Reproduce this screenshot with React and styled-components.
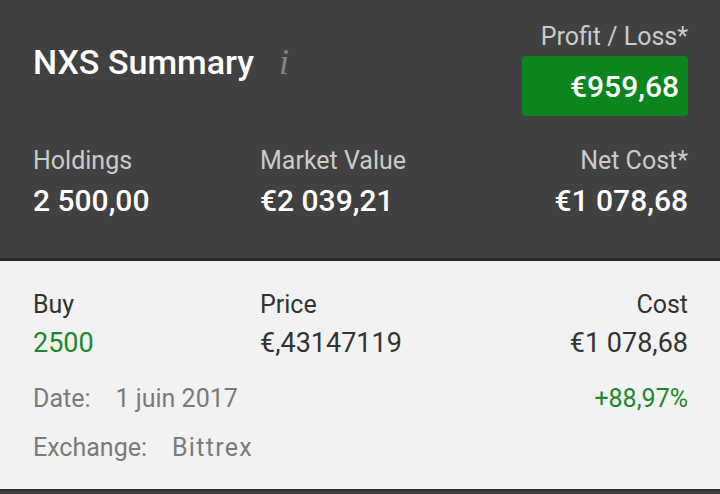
import React from "react";
import styled, { createGlobalStyle } from "styled-components";

const GlobalStyle = createGlobalStyle`
  html, body {
    margin: 0;
    padding: 0;
    background: #414141;
    font-family: Roboto, "Liberation Sans", Arial, sans-serif;
  }
`;

const Page = styled.div`
  width: 720px;
  height: 494px;
  background: #414141;
  overflow: hidden;
`;

const TopPanel = styled.section`
  background: #414141;
  padding: 22px 32px 39px 33px;
  border-bottom: 3px solid #2a2a2a;
`;

const Header = styled.div`
  display: flex;
  justify-content: space-between;
  align-items: flex-start;
`;

const TitleWrap = styled.div`
  display: flex;
  align-items: baseline;
  margin-top: 19px;
`;

const Title = styled.h1`
  margin: 0;
  font-size: 34px;
  line-height: 40px;
  font-weight: 500;
  color: #ffffff;
`;

const Info = styled.span`
  margin-left: 25px;
  font-family: "Liberation Serif", "DejaVu Serif", serif;
  font-style: italic;
  font-size: 36px;
  color: #858585;
`;

const ProfitBlock = styled.div`
  display: flex;
  flex-direction: column;
  align-items: flex-end;
`;

const Label = styled.div`
  font-size: 25px;
  line-height: 30px;
  color: ${({ $tone }) => ($tone === "dark" ? "#333333" : $tone === "grey" ? "#7a7a7a" : "#cbcbcb")};
  text-align: ${({ $right }) => ($right ? "right" : "left")};
`;

const ProfitBox = styled.div`
  margin-top: 4px;
  width: 166px;
  height: 60px;
  box-sizing: border-box;
  background: #0b861e;
  border-radius: 4px;
  padding-right: 9px;
  display: flex;
  align-items: center;
  justify-content: flex-end;
  font-size: 30px;
  font-weight: 500;
  color: #ffffff;
`;

const StatGrid = styled.div`
  display: grid;
  grid-template-columns: 227px 1fr auto;
  margin-top: ${({ $top }) => $top}px;
`;

const Stat = styled.div`
  display: flex;
  flex-direction: column;
  align-items: ${({ $right }) => ($right ? "flex-end" : "flex-start")};
  gap: ${({ $gap }) => $gap}px;
`;

const BigValue = styled.div`
  font-size: 30px;
  line-height: 36px;
  font-weight: 500;
  color: #ffffff;
`;

const BottomPanel = styled.section`
  background: #f2f2f2;
  padding: 29px 32px 26px 33px;
  border-bottom: 2px solid #2e2e2e;
`;

const Value = styled.div`
  font-size: 27px;
  line-height: 34px;
  color: ${({ $green }) => ($green ? "#1b8a2c" : "#333333")};
`;

const MetaRow = styled.div`
  display: flex;
  justify-content: space-between;
  margin-top: ${({ $top }) => $top}px;
  font-size: 25px;
  line-height: 30px;
  color: #7a7a7a;
`;

const MetaPair = styled.div`
  display: flex;
  gap: 25px;
`;

const MetaValue = styled.span`
  letter-spacing: ${({ $wide }) => ($wide ? "1.3px" : "0")};
`;

const Percent = styled.div`
  color: #1b8a2c;
`;

export default function App() {
  return (
    <Page>
      <GlobalStyle />
      <TopPanel>
        <Header>
          <TitleWrap>
            <Title>NXS Summary</Title>
            <Info>i</Info>
          </TitleWrap>
          <ProfitBlock>
            <Label $right>Profit / Loss*</Label>
            <ProfitBox>€959,68</ProfitBox>
          </ProfitBlock>
        </Header>

        <StatGrid $top={30}>
          <Stat $gap={7}>
            <Label>Holdings</Label>
            <BigValue>2 500,00</BigValue>
          </Stat>
          <Stat $gap={7}>
            <Label>Market Value</Label>
            <BigValue>€2 039,21</BigValue>
          </Stat>
          <Stat $gap={7} $right>
            <Label>Net Cost*</Label>
            <BigValue>€1 078,68</BigValue>
          </Stat>
        </StatGrid>
      </TopPanel>

      <BottomPanel>
        <StatGrid $top={0}>
          <Stat $gap={6}>
            <Label $tone="dark">Buy</Label>
            <Value $green>2500</Value>
          </Stat>
          <Stat $gap={6}>
            <Label $tone="dark">Price</Label>
            <Value>€,43147119</Value>
          </Stat>
          <Stat $gap={6} $right>
            <Label $tone="dark">Cost</Label>
            <Value>€1 078,68</Value>
          </Stat>
        </StatGrid>

        <MetaRow $top={24}>
          <MetaPair>
            <span>Date:</span>
            <MetaValue>1 juin 2017</MetaValue>
          </MetaPair>
          <Percent>+88,97%</Percent>
        </MetaRow>
        <MetaRow $top={19}>
          <MetaPair>
            <span>Exchange:</span>
            <MetaValue $wide>Bittrex</MetaValue>
          </MetaPair>
        </MetaRow>
      </BottomPanel>
    </Page>
  );
}
